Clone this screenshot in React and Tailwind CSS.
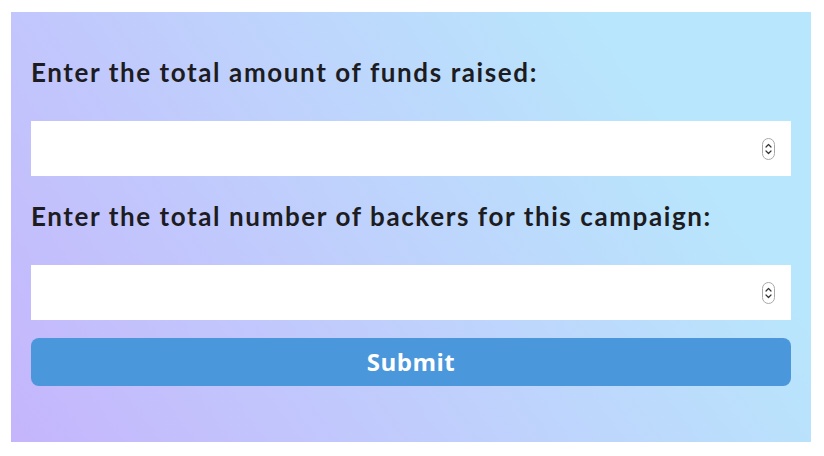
import React, { useState } from 'react';

const Spinner = () => (
    <svg width="13" height="22" viewBox="0 0 13 22" className="absolute right-[16px] top-1/2 -translate-y-1/2 pointer-events-none">
        <rect x="0.5" y="0.5" width="12" height="21" rx="6" fill="#fff" stroke="#a8a8a8" />
        <path d="M4 9 L6.5 6.5 L9 9" fill="none" stroke="#333" strokeWidth="1.2" strokeLinecap="round" strokeLinejoin="round" />
        <path d="M4 13 L6.5 15.5 L9 13" fill="none" stroke="#333" strokeWidth="1.2" strokeLinecap="round" strokeLinejoin="round" />
    </svg>
);

const NumberField = ({ value, onChange }) => (
    <div className="relative">
        <input
            type="text"
            inputMode="numeric"
            value={value}
            onChange={(e) => onChange(e.target.value)}
            className="w-full h-[55px] bg-white px-3 text-lg outline-none"
        />
        <Spinner />
    </div>
);

const App = () => {
    const [funds, setFunds] = useState('');
    const [backers, setBackers] = useState('');

    const handleSubmit = (e) => {
        e.preventDefault();
    };

    return (
        <div className="w-[824px] h-[456px] bg-white pt-[12px] pl-[11px]">
            <form
                onSubmit={handleSubmit}
                className="w-[800px] h-[430px] bg-linear-55 from-[#c5b5fc] to-[#b8e6fc] to-80% px-[20px] pt-[42px] flex flex-col"
            >
                <label className="block text-[26px] leading-[36px] font-bold tracking-[1.6px] text-[#1c1c22] mb-[31px] font-['Lato',sans-serif]">
                    Enter the total amount of funds raised:
                </label>
                <NumberField value={funds} onChange={setFunds} />
                <label className="block text-[26px] leading-[36px] font-bold tracking-[1.6px] text-[#1c1c22] mt-[22px] mb-[31px] font-['Lato',sans-serif]">
                    Enter the total number of backers for this campaign:
                </label>
                <NumberField value={backers} onChange={setBackers} />
                <button
                    type="submit"
                    className="mt-[18px] h-[48px] w-full rounded-lg bg-[#4a97db] text-white text-[24px] tracking-[0.5px] font-bold font-['Open_Sans',sans-serif]"
                >
                    Submit
                </button>
            </form>
        </div>
    );
};

export default App;
